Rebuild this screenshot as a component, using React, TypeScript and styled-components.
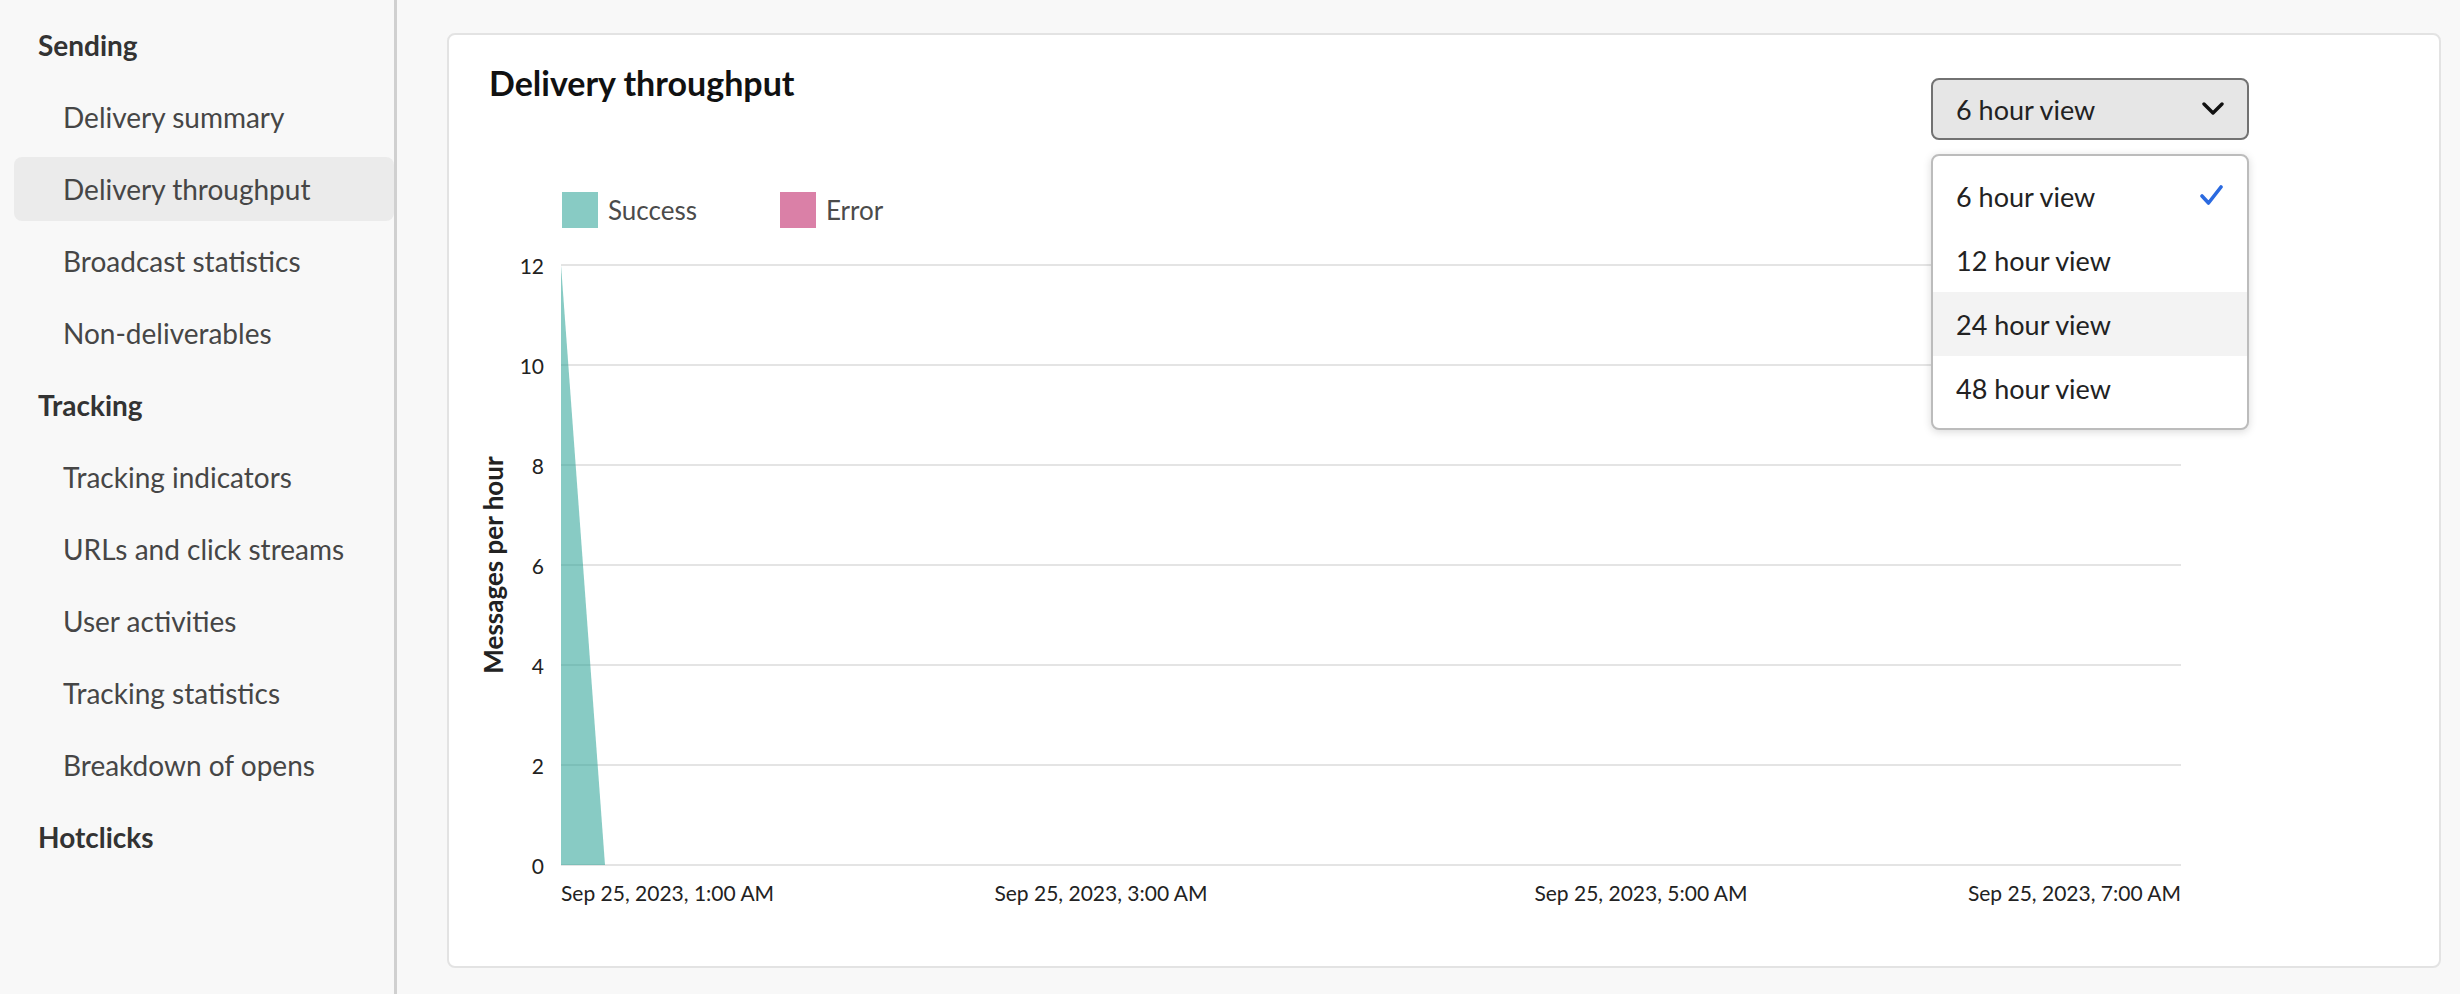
import React from "react";
import styled, { createGlobalStyle } from "styled-components";

const GlobalStyle = createGlobalStyle`
	html, body {
		margin: 0;
		padding: 0;
		background: #f8f8f8;
		font-family: Lato, "Noto Sans", sans-serif;
	}
	* {
		box-sizing: border-box;
	}
`;

const Page = styled.div`
	display: flex;
	height: 100vh;
	overflow: hidden;
`;

const Sidebar = styled.nav`
	width: 397px;
	flex-shrink: 0;
	border-right: 3px solid #d0d0d0;
	padding: 13px 0 0 14px;
	background: #f8f8f8;
`;

const NavRow = styled.div<{ $heading?: boolean; $active?: boolean }>`
	height: 64px;
	margin-bottom: 8px;
	display: flex;
	align-items: center;
	border-radius: 8px;
	padding-left: ${(p) => (p.$heading ? "24px" : "49px")};
	font-size: 28px;
	font-weight: ${(p) => (p.$heading ? 700 : 400)};
	color: ${(p) => (p.$heading ? "#333" : "#464646")};
	background: ${(p) => (p.$active ? "#ebebeb" : "transparent")};
	white-space: nowrap;
`;

const Main = styled.main`
	flex: 1;
	display: flex;
	flex-direction: column;
	padding: 33px 19px 26px 50px;
`;

const Card = styled.section`
	flex: 1;
	background: #fff;
	border: 2px solid #e3e3e3;
	border-radius: 8px;
	padding: 31px 0 0 40px;
`;

const Header = styled.div`
	width: 1760px;
	display: flex;
	justify-content: space-between;
	align-items: flex-start;
`;

const Title = styled.h2`
	margin: 0;
	font-size: 34px;
	line-height: 34px;
	font-weight: 700;
	color: #111;
`;

const Picker = styled.div`
	position: relative;
	width: 318px;
	margin-top: 12px;
`;

const PickerButton = styled.button`
	width: 100%;
	height: 62px;
	display: flex;
	align-items: center;
	justify-content: space-between;
	padding: 0 23px;
	background: #e6e6e6;
	border: 2px solid #727272;
	border-radius: 8px;
	font-family: inherit;
	font-size: 27px;
	color: #222;
`;

const Menu = styled.ul`
	position: absolute;
	top: calc(100% + 14px);
	left: 0;
	width: 100%;
	margin: 0;
	padding: 8px 0;
	list-style: none;
	background: #fff;
	border: 2px solid #bcbcbc;
	border-radius: 8px;
	box-shadow: 0 2px 8px rgba(0, 0, 0, 0.15);
	z-index: 2;
`;

const MenuItem = styled.li<{ $hover?: boolean }>`
	height: 64px;
	display: flex;
	align-items: center;
	justify-content: space-between;
	padding: 0 23px;
	font-size: 27px;
	color: #222;
	background: ${(p) => (p.$hover ? "#f3f3f3" : "transparent")};
`;

const Legend = styled.div`
	display: flex;
	gap: 83px;
	margin: 52px 0 0 73px;
`;

const LegendItem = styled.div`
	display: flex;
	align-items: center;
	gap: 10px;
	font-size: 26px;
	color: #4b4b4b;
`;

const Swatch = styled.span<{ $color: string }>`
	width: 36px;
	height: 36px;
	background: ${(p) => p.$color};
`;

const ChartSvg = styled.svg`
	display: block;
	margin: 17px 0 0 -20px;
	overflow: visible;
	font-family: Lato, "Noto Sans", sans-serif;
`;

const nav = [
	{ title: "Sending", items: ["Delivery summary", "Delivery throughput", "Broadcast statistics", "Non-deliverables"] },
	{
		title: "Tracking",
		items: ["Tracking indicators", "URLs and click streams", "User activities", "Tracking statistics", "Breakdown of opens"],
	},
	{ title: "Hotclicks", items: [] as string[] },
];

const options = ["6 hour view", "12 hour view", "24 hour view", "48 hour view"];

const PLOT_L = 92;
const PLOT_R = 1712;
const PLOT_T = 20;
const PLOT_B = 620;

const Chevron = () => (
	<svg width="22" height="16" viewBox="0 0 22 16">
		<polyline points="2,3 11,12 20,3" fill="none" stroke="#111" strokeWidth="3.4" strokeLinecap="round" strokeLinejoin="round" />
	</svg>
);

const Check = () => (
	<svg width="24" height="22" viewBox="0 0 24 22">
		<polyline points="2,11 8.5,18 21,2" fill="none" stroke="#2b6ae0" strokeWidth="3.6" strokeLinecap="round" strokeLinejoin="round" />
	</svg>
);

const Chart = () => {
	const ticks = [12, 10, 8, 6, 4, 2, 0];
	const xLabels = [
		{ x: PLOT_L, text: "Sep 25, 2023, 1:00 AM", anchor: "start" },
		{ x: PLOT_L + 540, text: "Sep 25, 2023, 3:00 AM", anchor: "middle" },
		{ x: PLOT_L + 1080, text: "Sep 25, 2023, 5:00 AM", anchor: "middle" },
		{ x: PLOT_R, text: "Sep 25, 2023, 7:00 AM", anchor: "end" },
	];
	const y = (v: number) => PLOT_B - (v / 12) * (PLOT_B - PLOT_T);
	return (
		<ChartSvg width={1740} height={680}>
			{ticks.map((t) => (
				<g key={t}>
					<line x1={PLOT_L} x2={PLOT_R} y1={y(t)} y2={y(t)} stroke="#e4e4e4" strokeWidth={2} />
					<text x={75} y={y(t)} textAnchor="end" dominantBaseline="central" fontSize={21} fill="#222">
						{t}
					</text>
				</g>
			))}
			<polygon points={`${PLOT_L},${y(12)} ${PLOT_L + 44},${PLOT_B} ${PLOT_L},${PLOT_B}`} fill="rgb(39,160,148)" fillOpacity={0.55} />
			<text
				transform={`translate(24 ${(PLOT_T + PLOT_B) / 2}) rotate(-90)`}
				textAnchor="middle"
				dominantBaseline="central"
				fontSize={26}
				fontWeight={700}
				fill="#222"
			>
				Messages per hour
			</text>
			{xLabels.map((l) => (
				<text key={l.text} x={l.x} y={647} textAnchor={l.anchor} dominantBaseline="central" fontSize={21} fill="#222">
					{l.text}
				</text>
			))}
		</ChartSvg>
	);
};

export default function App() {
	return (
		<Page>
			<GlobalStyle />
			<Sidebar>
				{nav.map((section) => (
					<React.Fragment key={section.title}>
						<NavRow $heading>{section.title}</NavRow>
						{section.items.map((item) => (
							<NavRow key={item} $active={item === "Delivery throughput"}>
								{item}
							</NavRow>
						))}
					</React.Fragment>
				))}
			</Sidebar>
			<Main>
				<Card>
					<Header>
						<Title>Delivery throughput</Title>
						<Picker>
							<PickerButton>
								6 hour view
								<Chevron />
							</PickerButton>
							<Menu>
								{options.map((o) => (
									<MenuItem key={o} $hover={o === "24 hour view"}>
										{o}
										{o === "6 hour view" && <Check />}
									</MenuItem>
								))}
							</Menu>
						</Picker>
					</Header>
					<Legend>
						<LegendItem>
							<Swatch $color="#88cbc4" />
							Success
						</LegendItem>
						<LegendItem>
							<Swatch $color="#da80a7" />
							Error
						</LegendItem>
					</Legend>
					<Chart />
				</Card>
			</Main>
		</Page>
	);
}
